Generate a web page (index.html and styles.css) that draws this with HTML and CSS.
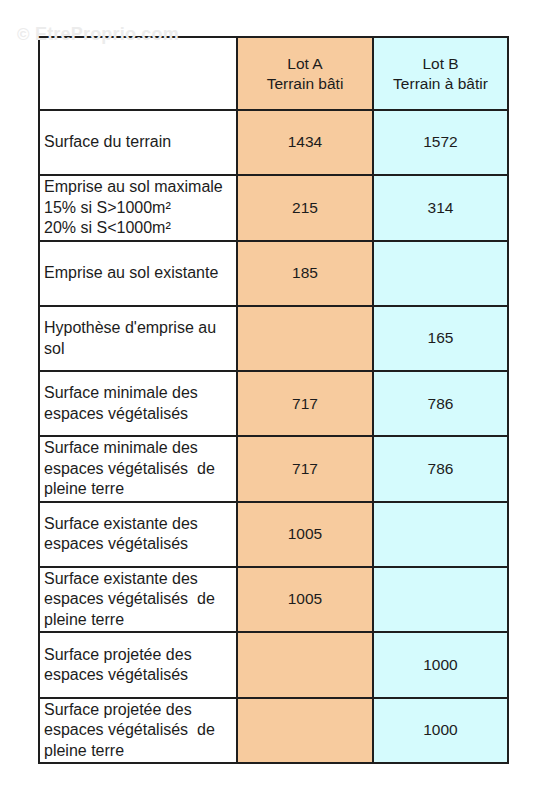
FILE: index.html
```html
<!DOCTYPE html>
<html lang="fr">
<head>
<meta charset="utf-8">
<title>Lots</title>
<link rel="stylesheet" href="styles.css">
</head>
<body>
<div class="watermark"><span class="copy">©</span> EtreProprio.com</div>
<div class="page">
  <div class="grid">
    <div class="cell label head"></div>
    <div class="cell a head">Lot A<br>Terrain bâti</div>
    <div class="cell b head">Lot B<br>Terrain à bâtir</div>

    <div class="cell label">Surface du terrain</div>
    <div class="cell a">1434</div>
    <div class="cell b">1572</div>

    <div class="cell label">Emprise au sol maximale<br>15% si S&gt;1000m²<br>20% si S&lt;1000m²</div>
    <div class="cell a">215</div>
    <div class="cell b">314</div>

    <div class="cell label">Emprise au sol existante</div>
    <div class="cell a">185</div>
    <div class="cell b"></div>

    <div class="cell label">Hypothèse d'emprise au<br>sol</div>
    <div class="cell a"></div>
    <div class="cell b">165</div>

    <div class="cell label">Surface minimale des<br>espaces végétalisés</div>
    <div class="cell a">717</div>
    <div class="cell b">786</div>

    <div class="cell label">Surface minimale des<br>espaces végétalisés&nbsp; de<br>pleine terre</div>
    <div class="cell a">717</div>
    <div class="cell b">786</div>

    <div class="cell label">Surface existante des<br>espaces végétalisés</div>
    <div class="cell a">1005</div>
    <div class="cell b"></div>

    <div class="cell label">Surface existante des<br>espaces végétalisés&nbsp; de<br>pleine terre</div>
    <div class="cell a">1005</div>
    <div class="cell b"></div>

    <div class="cell label">Surface projetée des<br>espaces végétalisés</div>
    <div class="cell a"></div>
    <div class="cell b">1000</div>

    <div class="cell label">Surface projetée des<br>espaces végétalisés&nbsp; de<br>pleine terre</div>
    <div class="cell a"></div>
    <div class="cell b">1000</div>
  </div>
</div>
</body>
</html>
```

FILE: styles.css
```css
html, body {
  margin: 0;
  padding: 0;
  background: #ffffff;
}

body {
  font-family: "Liberation Sans", Arial, sans-serif;
  color: #1c1c1c;
  width: 549px;
  height: 800px;
  position: relative;
  overflow: hidden;
}

.page {
  padding: 36px 0 0 38px;
}

.grid {
  display: grid;
  grid-template-columns: 196px 134px 133px;
  grid-template-rows: 71px repeat(10, 63.3px);
  gap: 2px;
  padding: 2px;
  background: #1e1e1e;
  width: max-content;
}

.cell {
  display: flex;
  align-items: center;
  font-size: 16px;
  line-height: 20.5px;
}

.label {
  background: #ffffff;
  padding-left: 4px;
}

.a, .b {
  justify-content: center;
  text-align: center;
  font-size: 15.5px;
}

.a {
  background: #f7cb9e;
}

.b {
  background: #d5fbfd;
}

.head {
  font-size: 15.5px;
  line-height: 20px;
}

.watermark {
  position: absolute;
  left: 17px;
  top: 24px;
  font-size: 18px;
  font-weight: bold;
  color: #ececec;
  letter-spacing: 0.2px;
  z-index: 2;
}

.copy {
  font-size: 17px;
}
```
